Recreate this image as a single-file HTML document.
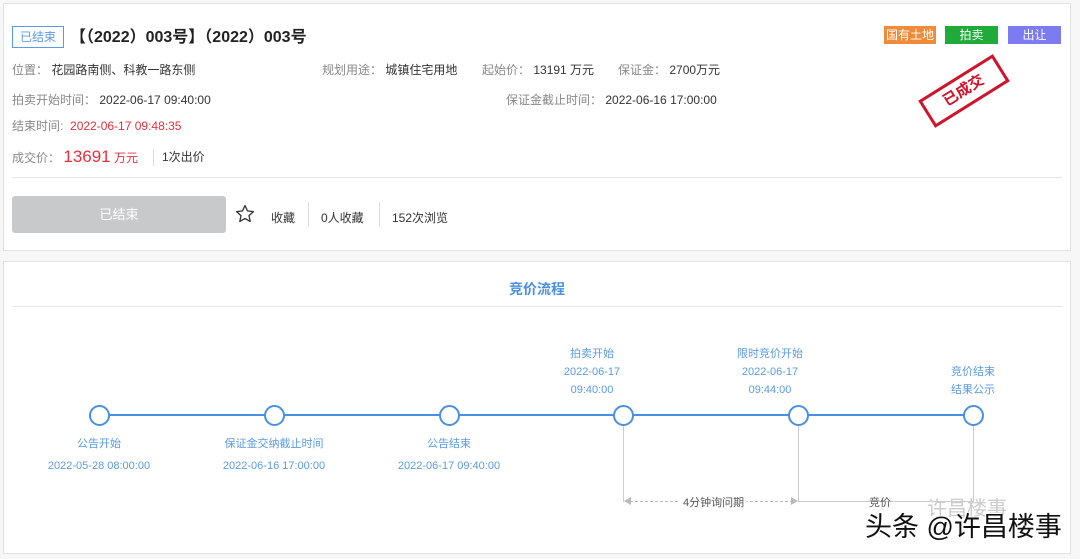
<!DOCTYPE html>
<html><head><meta charset="utf-8"><style>
*{margin:0;padding:0;box-sizing:border-box}
body{width:1080px;height:559px;background:#f7f7f7;font-family:"Liberation Sans","Noto Sans CJK SC",sans-serif;font-size:12px;color:#333;position:relative;overflow:hidden}
.a{position:absolute;white-space:nowrap}
.card{position:absolute;background:#fff;border:1px solid #e3e3e3}
.g{color:#888}
.b{color:#5b9be6}
.tc{transform:translateX(-50%);text-align:center}
</style></head><body>
<div class="card" style="left:3px;top:3px;width:1068px;height:248px"></div>
<div class="card" style="left:3px;top:261px;width:1068px;height:293px"></div>

<div class="a" style="left:12px;top:26px;width:52px;height:22px;border:1px solid #5b9be6;color:#5b9be6;font-size:12px;line-height:20px;text-align:center">已结束</div>
<div class="a" style="left:70px;top:27px;font-size:16px;font-weight:bold;color:#222;line-height:22px">【（2022）003号】（2022）003号</div>

<div class="a" style="left:884px;top:26px;width:52px;height:18px;background:#f08b3a;color:#fff;line-height:18px;text-align:center">国有土地</div>
<div class="a" style="left:945px;top:26px;width:53px;height:18px;background:#1faa3a;color:#fff;line-height:18px;text-align:center">拍卖</div>
<div class="a" style="left:1008px;top:26px;width:53px;height:18px;background:#7c7cf0;color:#fff;line-height:18px;text-align:center">出让</div>

<div class="a" style="left:920px;top:75px;width:88px;height:32px;border:3px solid #d0132a;transform:rotate(-32deg);transform-origin:center;color:#d0132a;font-weight:bold;font-size:15px;line-height:26px;text-align:center">已成交</div>

<div class="a" style="left:12px;top:62px;line-height:16px"><span class="g">位置：</span> 花园路南侧、科教一路东侧</div>
<div class="a" style="left:322px;top:62px;line-height:16px"><span class="g">规划用途：</span> 城镇住宅用地</div>
<div class="a" style="left:482px;top:62px;line-height:16px"><span class="g">起始价：</span> 13191 万元</div>
<div class="a" style="left:618px;top:62px;line-height:16px"><span class="g">保证金：</span> 2700万元</div>

<div class="a" style="left:12px;top:92px;line-height:16px"><span class="g">拍卖开始时间：</span> 2022-06-17 09:40:00</div>
<div class="a" style="left:506px;top:92px;line-height:16px"><span class="g">保证金截止时间：</span> 2022-06-16 17:00:00</div>

<div class="a" style="left:12px;top:118px;line-height:16px"><span class="g">结束时间:</span>&nbsp;&nbsp;<span style="color:#e8303c">2022-06-17 09:48:35</span></div>
<div class="a" style="left:12px;top:146px;line-height:22px"><span class="g">成交价：</span> <span style="color:#e8303c;font-size:17px">13691</span> <span style="color:#e8303c">万元</span></div>
<div class="a" style="left:153px;top:149px;width:1px;height:17px;background:#ddd"></div>
<div class="a" style="left:162px;top:149px;line-height:16px">1次出价</div>

<div class="a" style="left:12px;top:177px;width:1050px;height:1px;background:#e6e6e6"></div>
<div class="a" style="left:12px;top:196px;width:214px;height:37px;background:#c8c9cb;border-radius:3px;color:#fff;line-height:37px;text-align:center;font-size:13px">已结束</div>
<svg class="a" style="left:235px;top:204px" width="20" height="20" viewBox="0 0 20 20"><path d="M10 1.5l2.5 5.4 5.9.7-4.4 4 1.2 5.8L10 14.5l-5.2 2.9 1.2-5.8-4.4-4 5.9-.7z" fill="none" stroke="#333" stroke-width="1.3" stroke-linejoin="round"/></svg>
<div class="a" style="left:271px;top:209px">收藏</div>
<div class="a" style="left:308px;top:202px;width:1px;height:24px;background:#ddd"></div>
<div class="a" style="left:321px;top:209px">0人收藏</div>
<div class="a" style="left:379px;top:202px;width:1px;height:24px;background:#ddd"></div>
<div class="a" style="left:392px;top:209px">152次浏览</div>

<div class="a" style="left:537px;top:279px;transform:translateX(-50%);color:#4a8fe0;font-weight:bold;font-size:14px">竞价流程</div>
<div class="a" style="left:12px;top:306px;width:1050px;height:1px;background:#e6e6e6"></div>

<div class="a" style="left:99px;top:414px;width:874px;height:2px;background:#4a90e2"></div>
<div class="a" style="left:623px;top:425px;width:1px;height:77px;background:#ccc"></div>
<div class="a" style="left:798px;top:425px;width:1px;height:77px;background:#ccc"></div>
<div class="a" style="left:973px;top:425px;width:1px;height:77px;background:#ccc"></div>
<div class="a" style="left:630px;top:501px;width:163px;border-top:1px dashed #bbb"></div>
<div class="a" style="left:624px;top:497px;width:0;height:0;border-right:7px solid #bbb;border-top:4px solid transparent;border-bottom:4px solid transparent"></div>
<div class="a" style="left:791px;top:497px;width:0;height:0;border-left:7px solid #bbb;border-top:4px solid transparent;border-bottom:4px solid transparent"></div>
<div class="a" style="left:798px;top:501px;width:175px;height:1px;background:#ccc"></div>
<div class="a" style="left:680px;top:494px;background:#fff;padding:0 3px;color:#555;font-size:11px">4分钟询问期</div>
<div class="a" style="left:869px;top:494px;color:#555;font-size:11px">竞价</div>

<div class="a" style="left:89px;top:405px;width:21px;height:21px;border:2px solid #4a90e2;border-radius:50%;background:#fff"></div>
<div class="a" style="left:264px;top:405px;width:21px;height:21px;border:2px solid #4a90e2;border-radius:50%;background:#fff"></div>
<div class="a" style="left:439px;top:405px;width:21px;height:21px;border:2px solid #4a90e2;border-radius:50%;background:#fff"></div>
<div class="a" style="left:613px;top:405px;width:21px;height:21px;border:2px solid #4a90e2;border-radius:50%;background:#fff"></div>
<div class="a" style="left:788px;top:405px;width:21px;height:21px;border:2px solid #4a90e2;border-radius:50%;background:#fff"></div>
<div class="a" style="left:963px;top:405px;width:21px;height:21px;border:2px solid #4a90e2;border-radius:50%;background:#fff"></div>

<div class="a b tc" style="left:99px;top:433px;line-height:22px;font-size:11px">公告开始<br>2022-05-28 08:00:00</div>
<div class="a b tc" style="left:274px;top:433px;line-height:22px;font-size:11px">保证金交纳截止时间<br>2022-06-16 17:00:00</div>
<div class="a b tc" style="left:449px;top:433px;line-height:22px;font-size:11px">公告结束<br>2022-06-17 09:40:00</div>
<div class="a b tc" style="left:592px;top:345px;line-height:18px;font-size:11px">拍卖开始<br>2022-06-17<br>09:40:00</div>
<div class="a b tc" style="left:770px;top:345px;line-height:18px;font-size:11px">限时竞价开始<br>2022-06-17<br>09:44:00</div>
<div class="a b tc" style="left:973px;top:363px;line-height:18px;font-size:11px">竞价结束<br>结果公示</div>

<div class="a" style="left:927px;top:492px;color:#ccc;font-size:20px">许昌楼事</div>
<div class="a" style="left:865px;top:510px;color:#111;font-size:27px;line-height:34px;text-shadow:1px 1px 0 #fff,-1px -1px 0 #fff">头条 @许昌楼事</div>
</body></html>
